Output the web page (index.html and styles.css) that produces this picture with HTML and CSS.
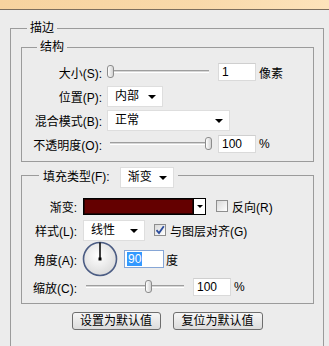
FILE: index.html
```html
<!DOCTYPE html>
<html lang="zh-CN">
<head>
  <meta charset="UTF-8">
  <title>描边</title>
  <link rel="stylesheet" href="styles.css">
</head>
<body>

  <!-- window title strip -->
  <div class="titlebar"></div>

  <fieldset class="group outer">
    <legend>描边</legend>

    <!-- STRUCTURE -->
    <fieldset class="group inner structure">
      <legend>结构</legend>
      <div class="form form-structure">
        <label>大小(S):</label>
        <div class="ctrl">
          <div class="slider w-104"><span class="thumb" style="left:0"></span></div>
          <span class="field w-38 gap-7">1</span>
          <span class="unit">像素</span>
        </div>

        <label>位置(P):</label>
        <div class="ctrl">
          <div class="select w-56">内部<span class="arrow"></span></div>
        </div>

        <label>混合模式(B):</label>
        <div class="ctrl">
          <div class="select w-123">正常<span class="arrow"></span></div>
        </div>

        <label>不透明度(O):</label>
        <div class="ctrl">
          <div class="slider w-104"><span class="thumb" style="left:98px"></span></div>
          <span class="field w-38 gap-7">100</span>
          <span class="unit">%</span>
        </div>
      </div>
    </fieldset>

    <!-- FILL -->
    <fieldset class="group inner fill">
      <legend class="legend-combo">
        <span>填充类型(F):</span>
        <div class="select w-54">渐变<span class="arrow"></span></div>
      </legend>
      <div class="form form-fill">
        <label>渐变:</label>
        <div class="ctrl">
          <div class="swatch"><span class="swatch-color"></span><span class="swatch-btn"><span class="arrow small"></span></span></div>
          <span class="check gap-10"></span>
          <span class="check-label">反向(R)</span>
        </div>

        <label>样式(L):</label>
        <div class="ctrl">
          <div class="select w-62">线性<span class="arrow"></span></div>
          <span class="check checked gap-9">
            <svg viewBox="0 0 12 12" width="12" height="12"><path d="M2.5 6.2 L5 9 L9.8 2.2" fill="none" stroke="#2b4c9c" stroke-width="1.8"/></svg>
          </span>
          <span class="check-label">与图层对齐(G)</span>
        </div>

        <label>角度(A):</label>
        <div class="ctrl">
          <svg class="dial" viewBox="0 0 36 36" width="36" height="36">
            <defs>
              <radialGradient id="dialFill" cx="45%" cy="40%" r="60%">
                <stop offset="0" stop-color="#ffffff"/>
                <stop offset="1" stop-color="#dcdcdc"/>
              </radialGradient>
            </defs>
            <circle cx="18" cy="18" r="16.5" fill="url(#dialFill)" stroke="#4c5d84" stroke-width="1.6"/>
            <line x1="18" y1="18" x2="18" y2="1.5" stroke="#000" stroke-width="1.5"/>
            <rect x="16.5" y="16.5" width="3" height="3" fill="#000"/>
          </svg>
          <span class="field angle w-40"><span class="selected">90</span></span>
          <span class="unit tight">度</span>
        </div>

        <label>缩放(C):</label>
        <div class="ctrl">
          <div class="slider w-103"><span class="thumb" style="left:62px"></span></div>
          <span class="field w-38 gap-7">100</span>
          <span class="unit">%</span>
        </div>
      </div>
    </fieldset>

    <div class="buttons">
      <button class="btn w-89">设置为默认值</button>
      <button class="btn w-90">复位为默认值</button>
    </div>
  </fieldset>

</body>
</html>
```

FILE: styles.css
```css
/* Photoshop-style layer effect panel: stroke */
body {
  margin: 0;
  height: 346px;
  overflow: hidden;
  background: #ececec;
  font-family: "Liberation Sans", "Noto Sans CJK SC", sans-serif;
  font-size: 12px;
  color: #000;
}

/* orange strip of the window chrome */
.titlebar {
  height: 9px;
  background: linear-gradient(to right, #f7d39f, #f9d9aa 60%, #fde3bb);
  border-bottom: 1px solid #7c6e5e;
}

/* GROUP BOXES */
.group {
  margin: 0;
  padding: 0;
  min-width: 0;
  border: 1px solid #9b9b9b;
}

.group > legend {
  padding: 0 3px;
  line-height: 14px;
}

/* outer box runs on below the window edge */
.outer {
  margin: 11px 0 0 10px;
  width: 314px;
  height: 326px;
  box-sizing: border-box;
}
.outer > legend {
  margin-left: 16px;
}

.inner {
  margin-left: 10px;
  width: 293px;
  box-sizing: border-box;
}
.inner > legend {
  margin-left: 15px;
}

.structure {
  margin-top: 5px;
  padding: 6px 0 5px;
}

.fill {
  margin-top: 5px;
  padding: 10px 0 5px;
}

/* combo legend: the frame line runs a little above the combo's middle,
   so the legend is kept 17px tall and the combo hangs below it */
.fill > legend.legend-combo {
  display: flex;
  align-items: flex-start;
  gap: 10px;
  height: 17px;
  margin-left: 17px;
  padding: 0 4px;
  line-height: 21px;
}
.legend-combo .select {
  margin-bottom: -4px;
}

/* FORM GRIDS */
.form {
  display: grid;
  align-items: center;
}

.form > label {
  justify-self: end;
  white-space: nowrap;
}

.form-structure {
  grid-template-columns: 80px auto;
  grid-auto-rows: 24px;
  column-gap: 5px;
}

.form-fill {
  grid-template-columns: 55px auto;
  grid-template-rows: 24px 24px 34px 22px;
  column-gap: 6px;
}

.ctrl {
  display: flex;
  align-items: center;
}

/* SLIDER */
.slider {
  position: relative;
  height: 16px;
}
.slider::before {
  content: "";
  position: absolute;
  left: 3px;
  right: 2px;
  top: 6px;
  height: 1px;
  background: #d6d6d6;
  border-top: 1px solid #9e9e9e;
  border-bottom: 1px solid #ffffff;
}
.thumb {
  position: absolute;
  top: 1px;
  width: 5px;
  height: 11px;
  border: 1px solid #8c8c8c;
  border-radius: 3px;
  background: linear-gradient(to right, #ffffff, #d2d2d2);
}

/* TEXT FIELDS */
.field {
  height: 18px;
  box-sizing: border-box;
  padding: 0 3px;
  line-height: 16px;
  background: #fff;
  border: 1px solid #dadada;
  border-top-color: #cfcfcf;
}

.field.angle {
  border-color: #86a6d6;
  padding-left: 2px;
}
.selected {
  background: #3399ff;
  color: #fff;
  padding: 0 1px;
}

.unit {
  margin-left: 3px;
}
.unit.tight {
  margin-left: 2px;
}

/* DROPDOWNS */
.select {
  position: relative;
  height: 21px;
  box-sizing: border-box;
  padding-left: 7px;
  line-height: 19px;
  background: #fff;
  border: 1px solid #dedede;
}
.select .arrow {
  position: absolute;
  right: 6px;
  top: 8px;
}

.arrow {
  width: 0;
  height: 0;
  border-left: 4px solid transparent;
  border-right: 4px solid transparent;
  border-top: 4px solid #000;
}
.arrow.small {
  border-left-width: 3px;
  border-right-width: 3px;
  border-top-width: 3px;
}

/* GRADIENT SWATCH */
.swatch {
  display: flex;
  height: 17px;
  box-sizing: border-box;
  border: 1px solid #000;
}
.swatch-color {
  width: 109px;
  background: #640000;
  border: 1px solid #2a0000;
  box-sizing: border-box;
}
.swatch-btn {
  width: 11px;
  border-left: 1px solid #000;
  background: #fff;
  display: flex;
  align-items: center;
  justify-content: center;
}

/* CHECKBOXES */
.check {
  width: 12px;
  height: 12px;
  box-sizing: border-box;
  border: 1px solid #8e8e8e;
  background: linear-gradient(135deg, #d9d9d9, #ffffff);
}
.check.checked {
  display: flex;
  align-items: center;
  justify-content: center;
}
.check.checked svg {
  flex: none;
}
.check-label {
  margin-left: 4px;
}

/* ANGLE DIAL */
.dial {
  margin-left: -1px;
  margin-right: 6px;
}

/* BUTTONS */
.buttons {
  display: flex;
  justify-content: center;
  gap: 12px;
  margin-top: 8px;
}
.btn {
  height: 18px;
  padding: 0;
  font: inherit;
  line-height: 16px;
  color: #000;
  border: 1px solid #6e6e6e;
  border-radius: 3px;
  background: linear-gradient(#f6f6f6, #dcdcdc);
}

/* widths and spacings */
.w-38 { width: 38px; }
.w-40 { width: 40px; }
.w-54 { width: 54px; }
.w-56 { width: 56px; }
.w-62 { width: 62px; }
.w-89 { width: 89px; }
.w-90 { width: 90px; }
.w-103 { width: 103px; }
.w-104 { width: 104px; }
.w-123 { width: 123px; }
.gap-7 { margin-left: 7px; }
.gap-9 { margin-left: 9px; }
.gap-10 { margin-left: 10px; }
```
